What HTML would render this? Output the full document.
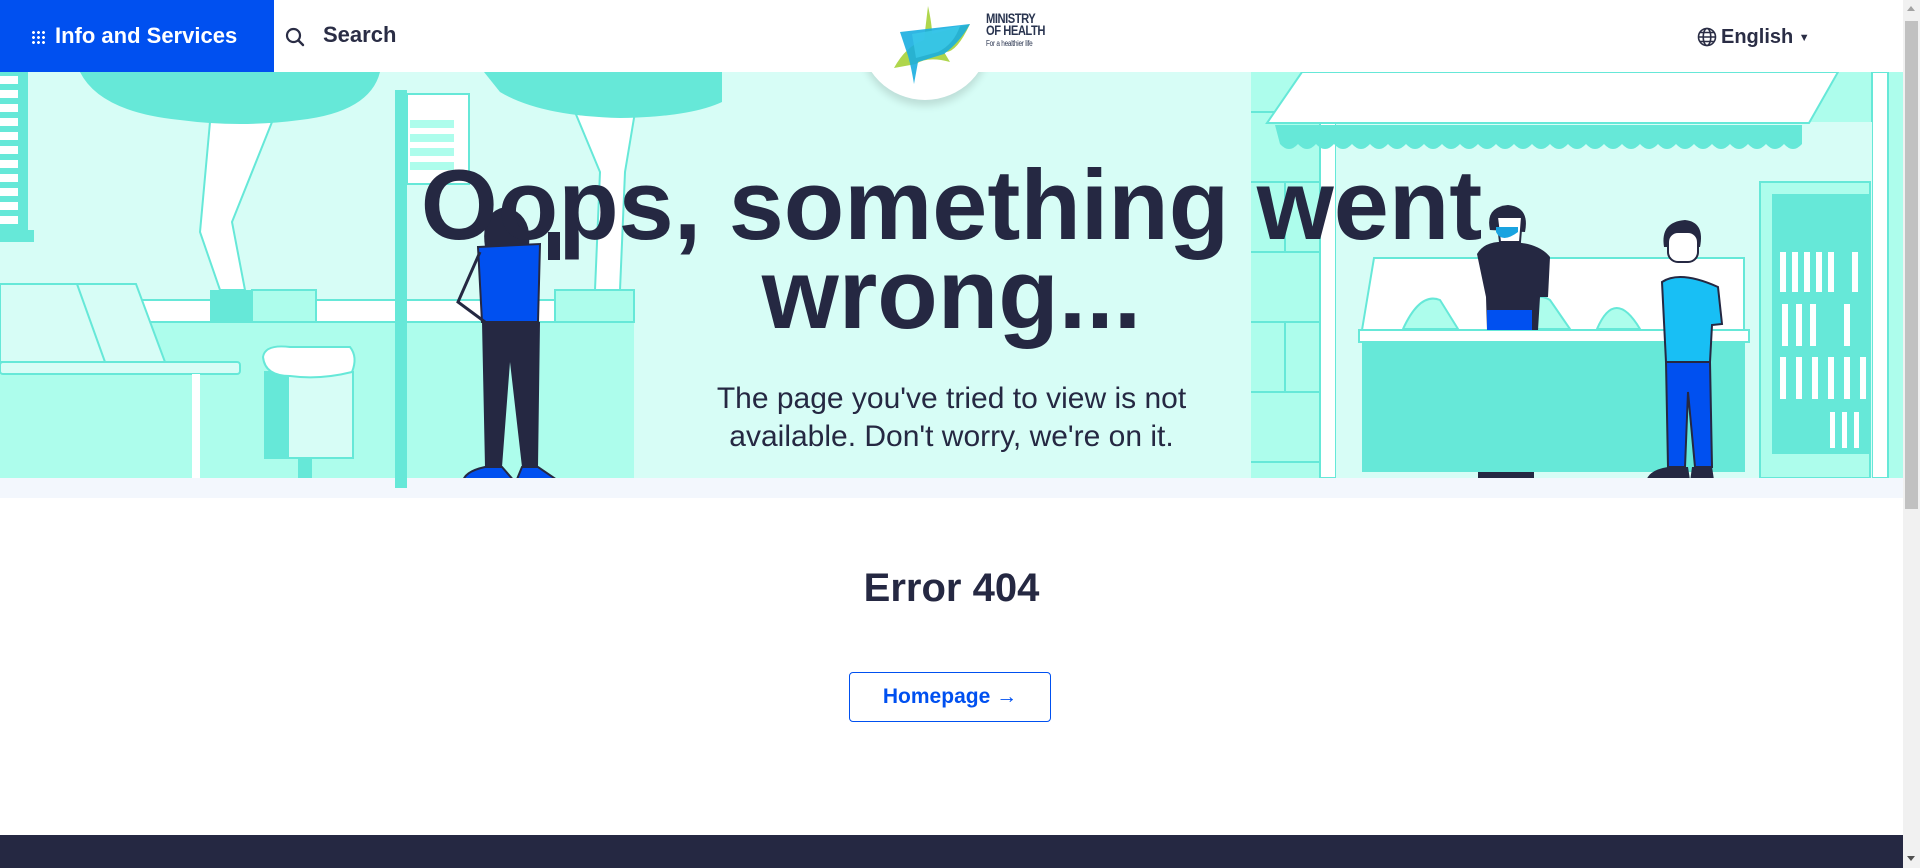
<!DOCTYPE html>
<html><head><meta charset="utf-8"><style>
*{margin:0;padding:0;box-sizing:border-box}
body{width:1920px;height:868px;overflow:hidden;background:#fff;font-family:"Liberation Sans",sans-serif;position:relative;color:#252842}
.hdr{position:absolute;left:0;top:0;width:1903px;height:72px;background:#fff;z-index:3}
.info{position:absolute;left:0;top:0;width:274px;height:72px;background:#0050f0;color:#fff;font-weight:bold;font-size:22px;line-height:72px;padding-left:55px}
.dots{position:absolute;left:31px;top:30px;width:14px;height:14px;background:radial-gradient(circle,#fff 1.3px,transparent 1.6px) 0 0/5px 5px}
.search{position:absolute;left:285px;top:0;line-height:70px;font-size:22px;font-weight:bold;color:#2a2d45}
.search svg{position:absolute;left:0;top:27px}
.search span{margin-left:38px}
.lang{position:absolute;left:1697px;top:24px;font-size:20px;font-weight:bold;color:#2a2d45;line-height:26px}
.lang svg{vertical-align:-4px;margin-right:4px}
.circ{position:absolute;left:860px;top:-30px;width:130px;height:130px;border-radius:50%;background:#fff;box-shadow:0 6px 8px rgba(0,0,0,.12);z-index:2}
.logo{position:absolute;left:888px;top:4px;z-index:4}
.lt{position:absolute;left:986px;top:12px;z-index:4;font-weight:900;font-size:14px;line-height:12px;color:#2a3550;letter-spacing:-.6px;transform:scaleX(.8);transform-origin:left}
.lt small{display:block;font-weight:normal;font-size:8px;letter-spacing:-.3px;margin-top:2px}
.hero{position:absolute;left:0;top:72px;width:1903px;height:426px}
h1{position:absolute;left:0;width:1903px;top:160px;text-align:center;font-size:99px;line-height:89px;font-weight:bold;color:#252842;z-index:2}
.sub{position:absolute;left:0;width:1903px;top:380px;text-align:center;font-size:30px;line-height:38px;color:#252842;z-index:2}
.err{position:absolute;left:0;width:1903px;top:566px;text-align:center;font-size:40px;font-weight:bold;color:#252842}
.btn{position:absolute;left:849px;top:672px;width:202px;height:50px;border:1.5px solid #0050f0;border-radius:4px;color:#0050f0;font-size:21px;font-weight:bold;text-align:center;line-height:47px}
.foot{position:absolute;left:0;top:835px;width:1903px;height:33px;background:#252842}
.sb{position:absolute;left:1903px;top:0;width:17px;height:868px;background:#f1f1f1}
.th{position:absolute;left:1905px;top:21px;width:13px;height:488px;background:#c1c1c1}
</style></head><body>
<div class="hero">
<svg width="1903" height="426" viewBox="0 0 1903 426">
<rect width="1903" height="426" fill="#d7fdf6"/>
<rect x="0" y="250" width="634" height="156" fill="#adfdec"/>
<rect x="0" y="228" width="634" height="22" fill="#fff" stroke="#66e8d8" stroke-width="2"/>
<rect x="210" y="218" width="42" height="32" fill="#66e8d8"/>
<rect x="252" y="218" width="64" height="32" fill="#adfdec" stroke="#66e8d8" stroke-width="2"/>
<rect x="555" y="218" width="79" height="32" fill="#adfdec" stroke="#66e8d8" stroke-width="2"/>
<rect x="0" y="0" width="28" height="160" fill="#66e8d8"/>
<g fill="#fff"><rect x="0" y="4" width="18" height="8"/><rect x="0" y="18" width="18" height="8"/><rect x="0" y="32" width="18" height="8"/><rect x="0" y="46" width="18" height="8"/><rect x="0" y="60" width="18" height="8"/><rect x="0" y="74" width="18" height="8"/><rect x="0" y="88" width="18" height="8"/><rect x="0" y="102" width="18" height="8"/><rect x="0" y="116" width="18" height="8"/><rect x="0" y="130" width="18" height="8"/><rect x="0" y="144" width="18" height="8"/></g>
<rect x="0" y="158" width="34" height="12" fill="#66e8d8"/>
<path d="M210 50 L200 160 L220 218 L245 218 L232 150 L272 50Z" fill="#fff" stroke="#66e8d8" stroke-width="2"/>
<path d="M80 0 H380 Q370 40 300 48 Q240 56 180 48 Q100 40 80 0Z" fill="#66e8d8"/>
<path d="M575 40 L600 100 L595 218 L620 218 L625 100 L635 40Z" fill="#fff" stroke="#66e8d8" stroke-width="2"/>
<path d="M484 0 H722 V30 Q690 45 620 46 Q540 44 500 20Z" fill="#66e8d8"/>
<path d="M0 212 H136 L165 290 H0Z" fill="#d7fdf6" stroke="#66e8d8" stroke-width="2"/>
<path d="M77 212 L105 290" stroke="#66e8d8" stroke-width="2"/>
<rect x="0" y="290" width="240" height="12" rx="3" fill="#d7fdf6" stroke="#66e8d8" stroke-width="2"/>
<rect x="192" y="302" width="8" height="104" fill="#fff"/>
<rect x="265" y="300" width="88" height="86" fill="#d7fdf6" stroke="#66e8d8" stroke-width="2"/>
<rect x="265" y="300" width="24" height="86" fill="#66e8d8"/>
<path d="M263 285 Q265 272 290 275 H350 Q358 285 352 300 Q320 308 290 304 Q265 304 263 285Z" fill="#fff" stroke="#66e8d8" stroke-width="2"/>
<rect x="298" y="386" width="14" height="20" fill="#66e8d8"/>
<rect x="395" y="18" width="12" height="398" fill="#66e8d8"/>
<rect x="407" y="22" width="62" height="90" fill="#fff" stroke="#66e8d8" stroke-width="2"/>
<g fill="#adfdec"><rect x="410" y="48" width="44" height="8"/><rect x="410" y="62" width="44" height="8"/><rect x="410" y="76" width="44" height="8"/><rect x="410" y="90" width="44" height="8"/></g>
<path d="M485 175 Q480 140 505 135 Q535 142 528 180Z" fill="#252842"/>
<path d="M478 175 L540 172 L538 250 L482 250Z" fill="#0050f0" stroke="#252842" stroke-width="2"/>
<path d="M482 250 L540 250 L538 395 L522 395 L510 290 L502 395 L485 395Z" fill="#252842"/>
<path d="M485 395 L502 395 L515 410 L463 412 Q462 400 485 395Z M522 395 L538 395 L560 410 L515 412Z" fill="#0050f0" stroke="#252842" stroke-width="2"/>
<path d="M480 180 L458 230 L485 250" fill="none" stroke="#252842" stroke-width="3"/>
<rect x="548" y="160" width="12" height="28" fill="#252842"/>
<rect x="1251" y="0" width="652" height="406" fill="#adfdec"/>
<g stroke="#66e8d8" stroke-width="2" fill="none"><path d="M1251 40 H1320 M1251 110 H1320 M1251 180 H1320 M1251 250 H1320 M1251 320 H1320 M1251 390 H1320 M1285 110 V180 M1285 250 V320"/></g>
<rect x="1320" y="50" width="16" height="356" fill="#fff" stroke="#66e8d8" stroke-width="2"/>
<rect x="1872" y="0" width="16" height="406" fill="#fff" stroke="#66e8d8" stroke-width="2"/>
<rect x="1336" y="50" width="536" height="356" fill="#d7fdf6"/>
<path d="M1302 0 H1838 L1809 51 H1267Z" fill="#fff" stroke="#66e8d8" stroke-width="2"/>
<path d="M1275 53 H1802 V72 Q1793 82 1784 72 Q1775 82 1766 72 Q1757 82 1748 72 Q1739 82 1730 72 Q1721 82 1712 72 Q1703 82 1694 72 Q1685 82 1676 72 Q1667 82 1658 72 Q1649 82 1640 72 Q1631 82 1622 72 Q1613 82 1604 72 Q1595 82 1586 72 Q1577 82 1568 72 Q1559 82 1550 72 Q1541 82 1532 72 Q1523 82 1514 72 Q1505 82 1496 72 Q1487 82 1478 72 Q1469 82 1460 72 Q1451 82 1442 72 Q1433 82 1424 72 Q1415 82 1406 72 Q1397 82 1388 72 Q1379 82 1370 72 Q1361 82 1352 72 Q1343 82 1334 72 Q1325 82 1316 72 Q1307 82 1298 72 Q1289 82 1280 72Z" fill="#66e8d8"/>
<rect x="1760" y="110" width="110" height="296" fill="#adfdec" stroke="#66e8d8" stroke-width="2"/>
<rect x="1772" y="122" width="98" height="260" fill="#66e8d8"/>
<g fill="#fff"><rect x="1780" y="180" width="6" height="40"/><rect x="1792" y="180" width="6" height="40"/><rect x="1804" y="180" width="6" height="40"/><rect x="1816" y="180" width="6" height="40"/><rect x="1828" y="180" width="6" height="40"/><rect x="1852" y="180" width="6" height="40"/><rect x="1782" y="232" width="6" height="42"/><rect x="1796" y="232" width="6" height="42"/><rect x="1810" y="232" width="6" height="42"/><rect x="1844" y="232" width="6" height="42"/><rect x="1780" y="285" width="6" height="42"/><rect x="1796" y="285" width="6" height="42"/><rect x="1812" y="285" width="6" height="42"/><rect x="1828" y="285" width="6" height="42"/><rect x="1844" y="285" width="6" height="42"/><rect x="1860" y="285" width="6" height="42"/><rect x="1830" y="340" width="5" height="36"/><rect x="1842" y="340" width="5" height="36"/><rect x="1854" y="340" width="5" height="36"/></g>
<path d="M1374 186 H1744 V258 H1362Z" fill="#fff" stroke="#66e8d8" stroke-width="2"/>
<rect x="1359" y="258" width="390" height="12" fill="#fff" stroke="#66e8d8" stroke-width="2"/>
<rect x="1362" y="270" width="383" height="130" fill="#66e8d8"/>
<rect x="1478" y="400" width="56" height="8" fill="#252842"/>
<path d="M1403 257 Q1420 220 1440 228 L1458 257Z M1515 257 Q1530 215 1550 228 L1570 257Z M1597 257 Q1615 215 1640 257Z" fill="#adfdec" stroke="#66e8d8" stroke-width="2"/>
<path d="M1490 158 Q1485 135 1508 133 Q1530 135 1525 160Z" fill="#252842"/>
<path d="M1497 145 L1522 145 L1520 170 L1500 170Z" fill="#fff" stroke="#252842" stroke-width="2"/>
<path d="M1496 160 Q1502 172 1518 160 V155 H1496Z" fill="#1aa3e0"/>
<path d="M1477 182 Q1485 168 1508 170 Q1538 170 1550 185 L1548 225 H1540 L1538 258 H1487 L1486 225 Z" fill="#252842"/>
<rect x="1487" y="238" width="45" height="20" fill="#0050f0"/>
<path d="M1664 175 Q1660 150 1685 148 Q1705 150 1700 175Z" fill="#252842"/>
<rect x="1668" y="160" width="30" height="30" rx="10" fill="#fff" stroke="#252842" stroke-width="2"/>
<path d="M1662 210 Q1680 198 1718 215 L1722 252 L1712 253 L1710 290 H1666Z" fill="#18bff5" stroke="#252842" stroke-width="2"/>
<path d="M1666 290 H1710 L1712 395 H1695 L1688 320 L1685 395 H1668Z" fill="#0050f0" stroke="#252842" stroke-width="2"/>
<path d="M1668 395 L1688 395 L1690 408 L1646 410 Q1648 398 1668 395Z M1692 395 L1712 395 L1714 408 L1690 410Z" fill="#252842"/>
<rect x="0" y="406" width="1903" height="20" fill="#f3f7fd"/>
<rect x="395" y="406" width="12" height="10" fill="#66e8d8"/>
</svg>
</div>
<div class="hdr">
<div class="info"><i class="dots"></i>Info and Services</div>
<div class="search"><svg width="20" height="20" viewBox="0 0 20 20"><circle cx="8.5" cy="8.5" r="6.5" fill="none" stroke="#2a2d45" stroke-width="2.2"/><path d="M13.5 13.5 L18 18" stroke="#2a2d45" stroke-width="2.4" stroke-linecap="round"/></svg><span>Search</span></div>
<div class="lang"><svg width="20" height="20" viewBox="0 0 20 20" fill="none" stroke="#2a2d45" stroke-width="1.6"><circle cx="10" cy="10" r="8.5"/><ellipse cx="10" cy="10" rx="3.8" ry="8.5"/><path d="M1.5 10H18.5M3 5.5H17M3 14.5H17"/></svg>English <span style="font-size:11px;vertical-align:2px">▼</span></div>
</div>
<div class="circ"></div>
<svg class="logo" width="84" height="82" viewBox="0 0 84 82">
<path d="M40 2 Q44 20 44 30 L82 20 Q68 50 56 48 L62 58 Q40 52 28 60 L6 64 Q18 42 36 36 Z" fill="#a6d139" opacity=".9"/>
<path d="M12 28 L82 20 Q72 38 56 50 L30 58 L26 80 Q22 56 18 46Z" fill="#1aaee0" opacity=".9"/>
<path d="M24 30 L72 22 Q66 40 50 48 L28 54Z" fill="#3bc9e8" opacity=".8"/>
</svg>
<div class="lt">MINISTRY<br>OF HEALTH<small>For a healthier life</small></div>
<h1>Oops, something went<br>wrong...</h1>
<div class="sub">The page you've tried to view is not<br>available. Don't worry, we're on it.</div>
<div class="err">Error 404</div>
<div class="btn">Homepage →</div>
<div class="foot"></div>
<div class="sb"></div><div class="th"></div>
<div style="position:absolute;left:1907px;top:6px;width:0;height:0;border-left:4.5px solid transparent;border-right:4.5px solid transparent;border-bottom:5px solid #a3a3a3"></div>
<div style="position:absolute;left:1907px;top:856px;width:0;height:0;border-left:4.5px solid transparent;border-right:4.5px solid transparent;border-top:5px solid #505050"></div>
</body></html>
